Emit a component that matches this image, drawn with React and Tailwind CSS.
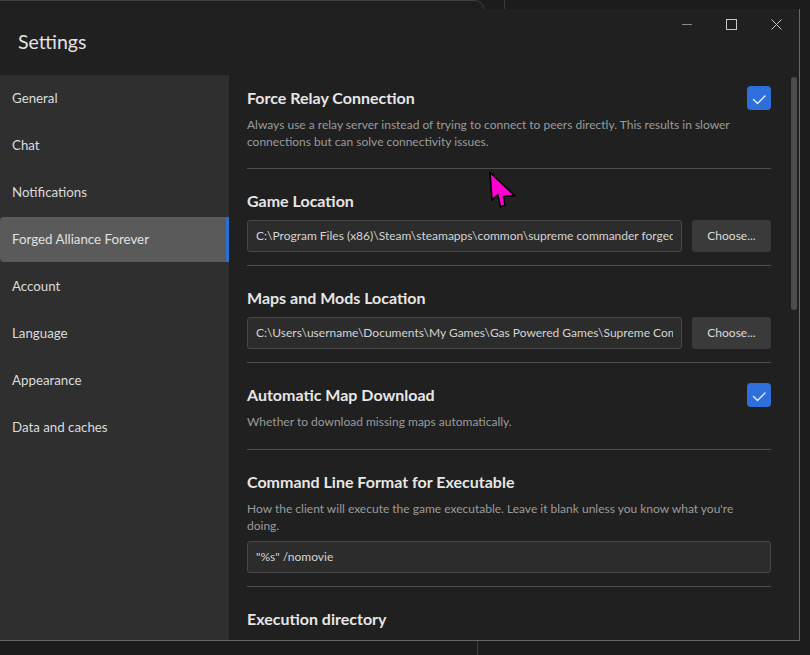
import React from "react";

const font = { fontFamily: "Lato, 'Noto Sans', sans-serif" };

function Check() {
  return (
    <div className="w-[24px] h-[24px] rounded-[4px] bg-[#2e6fdc] flex items-center justify-center shrink-0">
      <svg width="24" height="24" viewBox="0 0 24 24" fill="none">
        <path d="M6.5 13.5 L10.5 17.5 L18 10" stroke="#e8eefb" strokeWidth="1.4" strokeLinecap="round" strokeLinejoin="round" />
      </svg>
    </div>
  );
}

function Sep() {
  return <div className="h-px bg-[#4e4e4e]" />;
}

function Title({ children }) {
  return <div className="text-[16px] leading-[20px] font-bold text-[#e6e6e6] whitespace-nowrap">{children}</div>;
}

function Desc({ children, className = "" }) {
  return <div className={"text-[12px] leading-[17px] text-[#9b9b9b] whitespace-nowrap " + className}>{children}</div>;
}

function Field({ value, className = "" }) {
  return (
    <div className={"h-[32px] rounded-[3px] bg-[#2c2c2c] border border-[#484848] flex items-center px-[8px] " + className}>
      <div className="flex-1 min-w-0 overflow-hidden whitespace-nowrap text-[12px] text-[#d4d4d4]">{value}</div>
    </div>
  );
}

function PathRow({ value }) {
  return (
    <div className="mt-[9px] flex gap-[10px]">
      <Field value={value} className="flex-1 min-w-0" />
      <button className="w-[79px] h-[32px] rounded-[3px] bg-[#3a3a3a] text-[12px] text-[#dadada]">Choose...</button>
    </div>
  );
}

const nav = [
  "General",
  "Chat",
  "Notifications",
  "Forged Alliance Forever",
  "Account",
  "Language",
  "Appearance",
  "Data and caches",
];

export default function App() {
  return (
    <div className="relative w-[810px] h-[655px] bg-[#1c1c1c] overflow-hidden" style={font}>
      {/* windows behind */}
      <div className="absolute left-[-10px] top-0 w-[494px] h-[30px] border-t border-r border-[#3e3e3e] rounded-tr-[9px] bg-[#1e1e1e]" />
      <div className="absolute left-[504px] top-0 w-px h-[9px] bg-[#3a3a3a]" />
      <div className="absolute left-[477px] top-[641px] w-px h-[14px] bg-[#3c3c3c]" />

      {/* settings window */}
      <div className="absolute left-0 top-[9px] w-[800px] h-[632px] bg-[#202020] border-r border-b border-[#676767] flex flex-col">
        {/* title bar */}
        <div className="h-[66px] shrink-0 flex justify-between">
          <div className="self-center pl-[18px] text-[19.5px] text-[#e2e2e2]">Settings</div>
          <div className="flex h-[30px] self-start">
            <div className="w-[45px] flex items-center justify-center">
              <svg width="10" height="10" viewBox="0 0 10 10"><path d="M0 5.5 H10" stroke="#8a8a8a" strokeWidth="1" /></svg>
            </div>
            <div className="w-[45px] flex items-center justify-center">
              <svg width="11" height="11" viewBox="0 0 11 11"><rect x="0.5" y="0.5" width="10" height="10" fill="none" stroke="#c8c8c8" strokeWidth="1" /></svg>
            </div>
            <div className="w-[45px] flex items-center justify-center">
              <svg width="11" height="11" viewBox="0 0 11 11"><path d="M0.5 0.5 L10.5 10.5 M10.5 0.5 L0.5 10.5" stroke="#c8c8c8" strokeWidth="1" /></svg>
            </div>
          </div>
        </div>

        {/* body */}
        <div className="flex-1 min-h-0 flex">
          <div className="w-[229px] shrink-0 bg-[#2f2f2f] pt-px flex flex-col gap-[2px]">
            {nav.map((n) =>
              n === "Forged Alliance Forever" ? (
                <div key={n} className="h-[45px] flex items-center bg-[#5a5a5a] rounded-l-[4px] relative pl-[12px] text-[13.3px] text-[#e0e0e0]">
                  {n}
                  <div className="absolute right-0 top-0 bottom-0 w-[3px] rounded-[1px] bg-[#2d6fd8]" />
                </div>
              ) : (
                <div key={n} className="h-[45px] flex items-center pl-[12px] text-[13.3px] text-[#dcdcdc]">
                  {n}
                </div>
              )
            )}
          </div>

          <div className="flex-1 min-w-0 relative overflow-hidden pl-[18px] pr-[28px]">
            {/* Force relay */}
            <div className="pt-[11px] pb-[18px]">
              <div className="flex justify-between items-center h-[24px]">
                <Title>Force Relay Connection</Title>
                <Check />
              </div>
              <Desc className="mt-[6px]">
                Always use a relay server instead of trying to connect to peers directly. This results in slower
                <br />
                connections but can solve connectivity issues.
              </Desc>
            </div>
            <Sep />

            <div className="pt-[22px] pb-[13px]">
              <Title>Game Location</Title>
              <PathRow value="C:\Program Files (x86)\Steam\steamapps\common\supreme commander forged alliance" />
            </div>
            <Sep />

            <div className="pt-[22px] pb-[13px]">
              <Title>Maps and Mods Location</Title>
              <PathRow value="C:\Users\username\Documents\My Games\Gas Powered Games\Supreme Commander Forged Alliance" />
            </div>
            <Sep />

            <div className="pt-[20px] pb-[19px]">
              <div className="flex justify-between items-center h-[24px]">
                <Title>Automatic Map Download</Title>
                <Check />
              </div>
              <Desc className="mt-[6px]">Whether to download missing maps automatically.</Desc>
            </div>
            <Sep />

            <div className="pt-[22px] pb-[13px]">
              <Title>Command Line Format for Executable</Title>
              <Desc className="mt-[8px]">
                How the client will execute the game executable. Leave it blank unless you know what you're
                <br />
                doing.
              </Desc>
              <Field value={'"%s" /nomovie'} className="mt-[7px]" />
            </div>
            <Sep />

            <div className="pt-[22px]">
              <Title>Execution directory</Title>
            </div>

            {/* scrollbar thumb */}
            <div className="absolute right-[2px] top-[2px] w-[6px] h-[233px] rounded-full bg-[#4c4c4c]" />
          </div>
        </div>
      </div>

      {/* mouse cursor */}
      <svg className="absolute left-0 top-0 pointer-events-none" width="810" height="655">
        <polygon
          points="490,172.5 492,200 497.7,194.7 500.5,207 505,205 503.5,196.5 514.5,195.5"
          fill="#ff00d0"
          stroke="#000"
          strokeWidth="1.6"
          strokeLinejoin="miter"
        />
      </svg>
    </div>
  );
}
